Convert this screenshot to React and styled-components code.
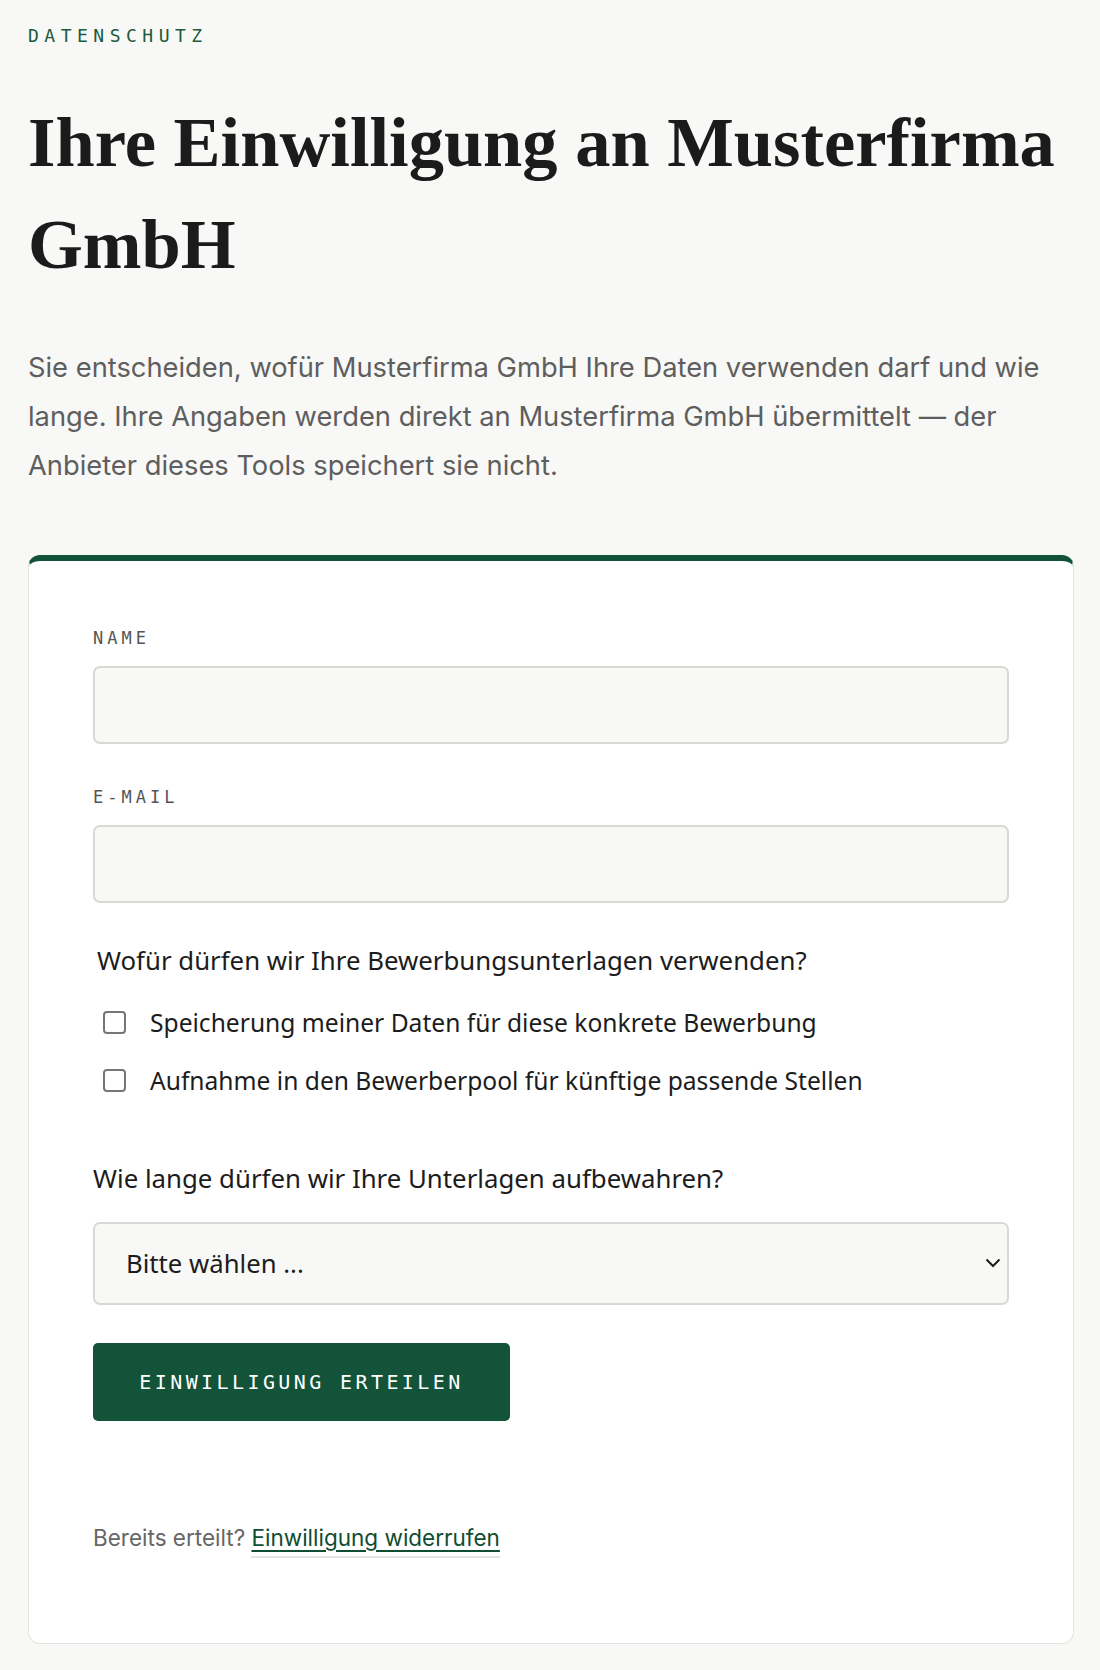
import React from 'react'
import styled, { createGlobalStyle } from 'styled-components'

const GlobalStyle = createGlobalStyle`
  html, body {
    margin: 0;
    padding: 0;
    background: #f8f8f6;
  }
  body {
    font-family: Inter, "Noto Sans", sans-serif;
    -webkit-font-smoothing: antialiased;
  }
  * { box-sizing: border-box; }
`

const Page = styled.main`
  padding: 25px 26px 28px 28px;
`

const Eyebrow = styled.div`
  font-family: "DejaVu Sans Mono", monospace;
  font-size: 18px;
  line-height: 21px;
  letter-spacing: 5.5px;
  color: #1d5a3f;
`

const Title = styled.h1`
  margin: 45px 0 0;
  font-family: "Liberation Serif", serif;
  font-weight: 700;
  font-size: 70.5px;
  line-height: 102px;
  color: #1b1b1b;
`

const Lead = styled.p`
  margin: 48px 0 0;
  font-family: Inter, sans-serif;
  font-size: 27.3px;
  line-height: 49px;
  color: #5e5e5e;
`

const Card = styled.section`
  margin-top: 65px;
  background: #fff;
  border: 1px solid #e3e3df;
  border-top: 6px solid #12533a;
  border-radius: 12px;
  padding: 67px 64px 92px;
`

const Field = styled.div`
  display: flex;
  flex-direction: column;
  margin-top: ${p => (p.$first ? 0 : 43)}px;
`

const Label = styled.label`
  font-family: "DejaVu Sans Mono", monospace;
  font-size: 17px;
  line-height: 20px;
  letter-spacing: 4px;
  color: #555;
  margin-bottom: 18px;
`

const Input = styled.input`
  height: 78px;
  border: 2px solid #d8d8d4;
  border-radius: 7px;
  background: #f8f8f6;
  padding: 0 30px;
  font: inherit;
  font-size: 24px;
  outline: none;
`

const Group = styled.fieldset`
  border: none;
  margin: 41px 0 0;
  padding: 0;
  min-width: 0;
`

const Question = styled.legend`
  padding: 0 ${p => (p.$inset ? 4 : 0)}px;
  font-family: "Noto Sans", sans-serif;
  font-size: 25.8px;
  line-height: 33px;
  color: #1c1c1c;
`

const Options = styled.div`
  display: flex;
  flex-direction: column;
  gap: 26px;
  margin-top: 29px;
`

const Option = styled.label`
  display: flex;
  align-items: center;
  gap: 24px;
  padding-left: 10px;
  height: 32px;
  font-family: "Noto Sans", sans-serif;
  font-size: 24.6px;
  color: #1c1c1c;
`

const Check = styled.input.attrs({ type: 'checkbox' })`
  appearance: none;
  margin: 0;
  width: 23px;
  height: 23px;
  border: 2px solid #767676;
  border-radius: 4px;
  background: #fff;
  flex: none;
`

const Duration = styled.div`
  margin-top: 66px;
  display: flex;
  flex-direction: column;
`

const DurationLabel = styled.label`
  font-family: "Noto Sans", sans-serif;
  font-size: 25.8px;
  line-height: 33px;
  color: #1c1c1c;
  margin-bottom: 27px;
`

const SelectWrap = styled.div`
  position: relative;
`

const Select = styled.select`
  appearance: none;
  width: 100%;
  height: 83px;
  border: 2px solid #d8d8d4;
  border-radius: 7px;
  background: #f8f8f6;
  padding: 0 40px 0 31px;
  font-family: "Noto Sans", sans-serif;
  font-size: 25.7px;
  color: #1c1c1c;
  outline: none;
`

const Chevron = styled.svg`
  position: absolute;
  right: 8px;
  top: 36px;
  pointer-events: none;
`

const Submit = styled.button`
  margin-top: 38px;
  width: 417px;
  height: 78px;
  border: none;
  border-radius: 5px;
  background: #12533a;
  color: #fff;
  font-family: "DejaVu Sans Mono", monospace;
  font-size: 20px;
  letter-spacing: 3.4px;
  cursor: pointer;
`

const Footer = styled.p`
  margin: 103px 0 0;
  font-family: Inter, sans-serif;
  font-size: 22.5px;
  color: #666;
`

const Revoke = styled.a`
  color: #0f4d33;
  text-decoration: underline;
  text-decoration-thickness: 2px;
  text-underline-offset: 4px;
  border-bottom: 2px solid #e2e2e0;
  padding-bottom: 5px;
`

export default function App() {
  return (
    <>
      <GlobalStyle />
      <Page>
        <Eyebrow>DATENSCHUTZ</Eyebrow>
        <Title>Ihre Einwilligung an Musterfirma GmbH</Title>
        <Lead>
          Sie entscheiden, wofür Musterfirma GmbH Ihre Daten verwenden darf und wie
          lange. Ihre Angaben werden direkt an Musterfirma GmbH übermittelt — der
          Anbieter dieses Tools speichert sie nicht.
        </Lead>
        <Card>
          <Field $first>
            <Label htmlFor="name">NAME</Label>
            <Input id="name" type="text" />
          </Field>
          <Field>
            <Label htmlFor="email">E-MAIL</Label>
            <Input id="email" type="email" />
          </Field>

          <Group>
            <Question $inset>Wofür dürfen wir Ihre Bewerbungsunterlagen verwenden?</Question>
            <Options>
              <Option>
                <Check />
                Speicherung meiner Daten für diese konkrete Bewerbung
              </Option>
              <Option>
                <Check />
                Aufnahme in den Bewerberpool für künftige passende Stellen
              </Option>
            </Options>
          </Group>

          <Duration>
            <DurationLabel htmlFor="duration">Wie lange dürfen wir Ihre Unterlagen aufbewahren?</DurationLabel>
            <SelectWrap>
              <Select id="duration" defaultValue="">
                <option value="">Bitte wählen ...</option>
                <option value="6">6 Monate</option>
                <option value="12">12 Monate</option>
                <option value="24">24 Monate</option>
              </Select>
              <Chevron width="16" height="10" viewBox="0 0 16 10">
                <path d="M1.5 1.5 L8 8 L14.5 1.5" fill="none" stroke="#1c1c1c" strokeWidth="2" />
              </Chevron>
            </SelectWrap>
          </Duration>

          <Submit type="button">EINWILLIGUNG ERTEILEN</Submit>

          <Footer>
            Bereits erteilt? <Revoke href="#">Einwilligung widerrufen</Revoke>
          </Footer>
        </Card>
      </Page>
    </>
  )
}
